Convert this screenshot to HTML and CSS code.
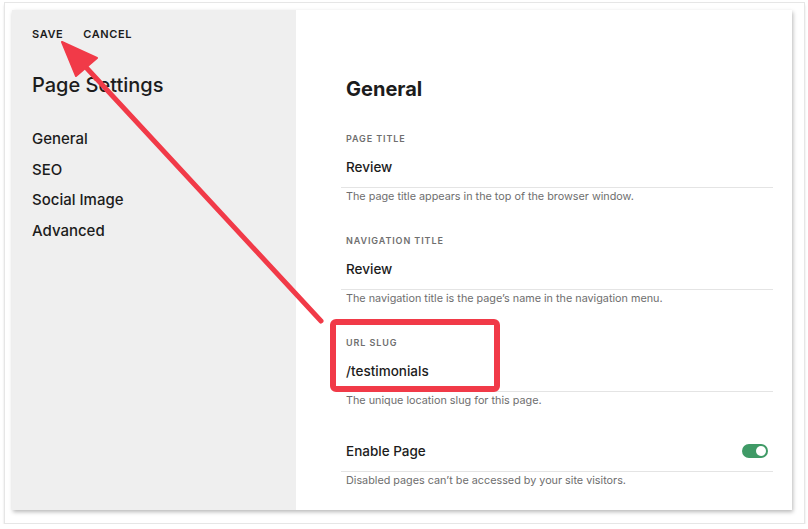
FILE: index.html
```html
<!DOCTYPE html>
<html lang="en">
<head>
    <meta charset="UTF-8">
    <title>Page Settings</title>
    <link rel="stylesheet" href="styles.css">
</head>
<body>

    <div class="frame">
        <div class="panel">
            <div class="sidebar">
                <div class="actions">
                    <a href="#" class="action">SAVE</a>
                    <a href="#" class="action">CANCEL</a>
                </div>
                <h2 class="sidebar-title">Page Settings</h2>
                <ul class="nav">
                    <li><a href="#">General</a></li>
                    <li><a href="#">SEO</a></li>
                    <li><a href="#">Social Image</a></li>
                    <li><a href="#">Advanced</a></li>
                </ul>
            </div>

            <div class="content">
                <h1 class="content-title">General</h1>

                <div class="field">
                    <div class="field-label">PAGE TITLE</div>
                    <div class="field-value">Review</div>
                    <div class="field-help">The page title appears in the top of the browser window.</div>
                </div>

                <div class="field">
                    <div class="field-label">NAVIGATION TITLE</div>
                    <div class="field-value">Review</div>
                    <div class="field-help">The navigation title is the page’s name in the navigation menu.</div>
                </div>

                <div class="field">
                    <div class="field-label">URL SLUG</div>
                    <div class="field-value">/testimonials</div>
                    <div class="field-help">The unique location slug for this page.</div>
                </div>

                <div class="field toggle-field">
                    <div class="field-value toggle-row">
                        <span>Enable Page</span>
                        <span class="toggle"><span class="knob"></span></span>
                    </div>
                    <div class="field-help">Disabled pages can’t be accessed by your site visitors.</div>
                </div>
            </div>
        </div>
    </div>

    <!-- annotation drawn over the screenshot -->
    <svg class="markup" width="808" height="529" viewBox="0 0 808 529">
        <rect x="333" y="322" width="164" height="67" rx="3" fill="none" stroke="#f13a48" stroke-width="6"/>
        <line x1="321" y1="321" x2="82" y2="63" stroke="#f13a48" stroke-width="5" stroke-linecap="round"/>
        <polygon points="62,42 97,58 76,76" fill="#f13a48" stroke="#f13a48" stroke-width="2" stroke-linejoin="round"/>
    </svg>

</body>
</html>
```

FILE: styles.css
```css
body {
    margin: 0;
    padding: 2px 4px 0 4px;
    background-color: #ffffff;
    font-family: Inter, "Liberation Sans", sans-serif;
    color: #1c1c1c;
}

.frame {
    width: 785px;
    height: 506px;
    padding: 7px;
    border: 1px solid #e6e6e6;
    background-color: #ffffff;
    box-shadow: 0 3px 2px rgba(0, 0, 0, 0.12);
}

.panel {
    display: flex;
    width: 780px;
    height: 500px;
    box-shadow: 1px 2px 4px rgba(0, 0, 0, 0.28);
}

.sidebar {
    width: 284px;
    padding: 17px 0 0 20px;
    box-sizing: border-box;
    background-color: #efefef;
}

.actions {
    display: flex;
    gap: 20px;
    line-height: 14px;
}

.action {
    font-size: 11px;
    font-weight: 600;
    letter-spacing: 0.6px;
    color: #1c1c1c;
    text-decoration: none;
}

.sidebar-title {
    margin: 30px 0 0 0;
    font-size: 20px;
    font-weight: 500;
    line-height: 28px;
}

.nav {
    list-style: none;
    margin: 30px 0 0 0;
    padding: 0;
    display: flex;
    flex-direction: column;
    gap: 10.7px;
}

.nav li {
    font-size: 15px;
    line-height: 20px;
}

.nav a {
    font-weight: 500;
    color: #1c1c1c;
    text-decoration: none;
}

.content {
    flex: 1;
    padding: 62px 19px 0 45px;
    background-color: #ffffff;
}

.content-title {
    margin: 0;
    padding-left: 5px;
    font-size: 20px;
    font-weight: 700;
    line-height: 34px;
}

.field {
    margin-top: 26px;
}

.field + .field {
    margin-top: 29px;
}

.field-label {
    padding-left: 5px;
    font-size: 9px;
    font-weight: 600;
    letter-spacing: 0.9px;
    line-height: 14px;
    color: #6f6f6f;
}

.field-value {
    margin-top: 11px;
    padding: 0 5px 10px 5px;
    font-size: 13.5px;
    line-height: 20px;
    font-weight: 500;
    border-bottom: 1px solid #e4e4e4;
}

.field-help {
    padding: 1px 0 0 5px;
    font-size: 10.8px;
    line-height: 16px;
    color: #6e6e6e;
}

.field + .toggle-field {
    margin-top: 32px;
}

.toggle-row {
    margin-top: 0;
    display: flex;
    justify-content: space-between;
    align-items: center;
}

.toggle {
    display: flex;
    justify-content: flex-end;
    align-items: center;
    width: 26px;
    height: 14px;
    padding: 0 2px;
    box-sizing: border-box;
    border-radius: 7px;
    background-color: #3f9a66;
}

.knob {
    width: 10px;
    height: 10px;
    border-radius: 50%;
    background-color: #ffffff;
}

.markup {
    position: absolute;
    left: 0;
    top: 0;
    pointer-events: none;
}
```
